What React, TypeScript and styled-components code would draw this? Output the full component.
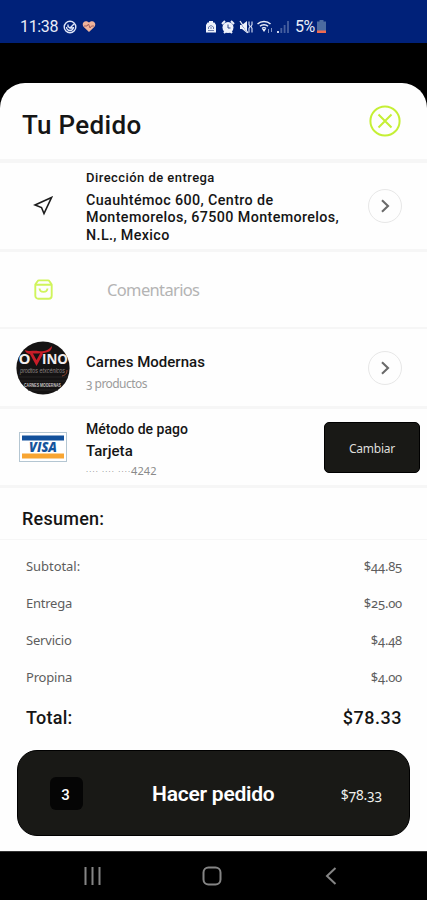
import React from 'react';
import styled, { createGlobalStyle } from 'styled-components';

const Global = createGlobalStyle`
  * { box-sizing: border-box; }
  body { margin: 0; background: #000; font-family: Roboto, "Liberation Sans", sans-serif; color: #151515; }
  button { font: inherit; border: 0; padding: 0; background: none; color: inherit; }
`;

const Screen = styled.div`
  width: 427px;
  height: 900px;
  display: flex;
  flex-direction: column;
  background: #000;
  overflow: hidden;
`;

const StatusBar = styled.header`
  height: 43px;
  flex: none;
  display: flex;
  align-items: center;
  padding: 10px 0 0 20px;
  margin-bottom: 40px;
  background: #002179;
  color: #e9edf8;
  font-size: 16px;
  line-height: 18px;
`;

const StatusGroup = styled.div<{ $gap: number; $left?: number }>`
  display: flex;
  align-items: center;
  gap: ${p => p.$gap}px;
  margin-left: ${p => p.$left ?? 0}px;
  svg { display: block; }
`;

const Clock = styled.span`
  letter-spacing: -0.35px;
`;

const Sheet = styled.main`
  height: 768px;
  flex: none;
  display: flex;
  flex-direction: column;
  background: #fefefe;
  border-radius: 25px 25px 0 0;
`;

const Row = styled.section<{ $h: number; $line: number }>`
  height: ${p => p.$h}px;
  flex: none;
  display: flex;
  align-items: center;
  border-bottom: ${p => p.$line}px solid #f6f6f6;
`;

const TitleRow = styled(Row)`
  justify-content: space-between;
  padding: 0 26px 0 22px;
`;

const Title = styled.h1`
  margin: 0;
  font-size: 26px;
  line-height: 32px;
  font-weight: 500;
  letter-spacing: 0.3px;
  padding-top: 8px;
`;

const IconCell = styled.div`
  width: 86px;
  flex: none;
  display: flex;
  justify-content: center;
  svg { display: block; }
`;

const Body = styled.div<{ $top?: number }>`
  flex: 1;
  min-width: 0;
  padding-top: ${p => p.$top ?? 0}px;
`;

const CommentBody = styled(Body)`
  padding: 2px 0 0 21px;
`;

const Label = styled.div<{ $size: number; $line: number; $track?: number }>`
  font-size: ${p => p.$size}px;
  line-height: ${p => p.$line}px;
  letter-spacing: ${p => p.$track ?? 0}px;
  font-weight: 500;
  font-style: normal;
  white-space: nowrap;
`;

const FieldName = styled(Label)`
  padding-bottom: 4px;
`;

const Light = styled.span<{ $size: number; $color: string; $track?: number }>`
  font-family: "Noto Sans", "Open Sans", sans-serif;
  font-variant-numeric: oldstyle-nums;
  font-size: ${p => p.$size}px;
  line-height: 18px;
  letter-spacing: ${p => p.$track ?? 0}px;
  color: ${p => p.$color};
  white-space: nowrap;
`;

const LiningLight = styled(Light)`
  font-variant-numeric: normal;
`;

const CardNumber = styled.div`
  display: flex;
  align-items: center;
  height: 16px;
`;

const Dots = styled.span`
  width: 45px;
  font-size: 8px;
  line-height: 17px;
  color: #777;
  letter-spacing: 1.15px;
  white-space: nowrap;
`;

const RoundButton = styled.button`
  width: 34px;
  height: 34px;
  flex: none;
  display: grid;
  place-items: center;
  margin-right: 25px;
  border: 1.5px solid #e7e7e7;
  border-radius: 50%;
`;

const ChangeButton = styled.button`
  width: 96px;
  height: 51px;
  flex: none;
  margin: 0 7px 0 0;
  padding-top: 2px;
  border: 1px solid #000;
  border-radius: 5px;
  background: #191916;
`;

const SummaryTitle = styled(Row)`
  padding: 11px 0 0 22px;
`;

const Lines = styled.div`
  display: flex;
  flex-direction: column;
  padding: 7px 25px 0 26px;
`;

const Line = styled.div<{ $h?: number }>`
  height: ${p => p.$h ?? 37.25}px;
  display: flex;
  align-items: center;
  justify-content: space-between;
`;

const OrderButton = styled.button`
  width: 393px;
  height: 86px;
  flex: none;
  display: flex;
  align-items: center;
  margin: auto 0 15px 17px;
  padding: 0 27px 0 32px;
  border: 1px solid #000;
  border-radius: 20px;
  background: #191916;
  color: #fff;
`;

const Count = styled.span`
  width: 33px;
  height: 33px;
  display: grid;
  place-items: center;
  padding: 3px 2px 0 0;
  border-radius: 6px;
  background: #050505;
  font-size: 15px;
  font-weight: 500;
`;

const OrderText = styled.span`
  margin: 1px auto 0 69px;
  font-size: 21px;
  font-weight: 600;
  letter-spacing: -0.23px;
`;

const OrderPrice = styled.span`
  padding-top: 2px;
`;

const NavBar = styled.nav`
  height: 49px;
  flex: none;
  display: flex;
  align-items: center;
  padding: 0 0 0 83px;
  border-top: 1px solid #333;
  svg { display: block; }
`;

const NavItem = styled.span<{ $left: number }>`
  margin-left: ${p => p.$left}px;
`;

const BatteryBox = styled.span`
  display: flex;
  align-items: center;
  gap: 2px;
  margin-left: 2px;
  font-size: 16px;
  letter-spacing: -0.6px;
`;

function Battery() {
  return (
    <BatteryBox>
      5%
      <svg width="9" height="13" viewBox="0 0 9 13">
        <path d="M2.5 0h4v1.500H9V13H0V1.500h2.500z" fill="#4c6ba0" />
        <path d="M0 10.500h9V13H0z" fill="#f06a50" />
      </svg>
    </BatteryBox>
  );
}

function Chevron() {
  return (
    <RoundButton aria-label="Abrir">
      <svg width="12" height="16" viewBox="0 0 12 16" fill="none" stroke="#6a6a6a" strokeWidth="2.1">
        <path d="M3 2.300 9 8 3 13.700" />
      </svg>
    </RoundButton>
  );
}

function StoreLogo() {
  return (
    <svg width="54" height="54" viewBox="0 0 54 54">
      <circle cx="27" cy="27" r="26.6" fill="#151313" />
      <path d="M2 36h50M4 40h46M12 49h30" stroke="#272525" />
      <g fontFamily="Open Sans" fontWeight="700" fill="#f1eded" fontSize="14.5">
        <text x="2.5" y="23" textLength="12" lengthAdjust="spacingAndGlyphs">O</text>
        <text x="26" y="23" textLength="26" lengthAdjust="spacingAndGlyphs">INO</text>
      </g>
      <path d="M9 9c4 2 9 0 13 1s10 0 14-5c0 5-4 7-10 7-5 1-10 0-13 1-2-1-4-2-4-4z" fill="#c91d28" />
      <path d="M15 12l5.500 10L26 12" fill="none" stroke="#c91d28" strokeWidth="2.8" />
      <text x="4" y="32" fontSize="6.500" fontStyle="italic" fontFamily="Liberation Sans" fill="#8b8583" textLength="45" lengthAdjust="spacingAndGlyphs">prodtos etxcénicos</text>
      <path d="M46 35c4-1 5-3 5-6" stroke="#94432d" fill="none" />
      <text x="8" y="46" fontSize="4.500" fontWeight="700" fontFamily="Liberation Sans" fill="#c8c4c4" textLength="37" lengthAdjust="spacingAndGlyphs">CARNES MODERNAS</text>
    </svg>
  );
}

function VisaCard() {
  return (
    <svg width="48" height="30" viewBox="0 0 48 30">
      <rect x=".5" y=".5" width="47" height="29" fill="#fff" stroke="#b4c6d2" />
      <path fill="#12509b" d="M3 3.500h42v5H3z" />
      <path fill="#f8a532" d="M3 21.500h42v5H3z" />
      <text x="10" y="20" fontFamily="Open Sans" fontSize="13.500" fontWeight="800" fontStyle="italic" fill="#16549c" textLength="28" lengthAdjust="spacingAndGlyphs">VISA</text>
    </svg>
  );
}

const charges = [
  { name: 'Subtotal:', amount: '$44.85', track: -0.05 },
  { name: 'Entrega', amount: '$25.00', track: -0.25 },
  { name: 'Servicio', amount: '$4.48', track: -0.2 },
  { name: 'Propina', amount: '$4.00', track: -0.2 },
];

export default function App() {
  return (
    <Screen>
      <Global />
      <StatusBar>
        <StatusGroup $gap={5}>
          <Clock>11:38</Clock>
          <svg width="14" height="14" viewBox="0 0 14 14" fill="none" stroke="#dfe6f8" strokeWidth="1.4">
            <circle cx="7" cy="7" r="5.8" /><path d="M3.500 7a3.500 3.500 0 0 0 7 0M5 4.500v2l2 1.500 2-2 2-2M7 8h3" />
          </svg>
          <svg width="14" height="13" viewBox="0 0 14 13">
            <path d="M7 12 1.500 6.700C-1 3 3-1 7 2.500 11-1 15 3 12.500 6.700z" fill="#f0b49b" />
            <path d="M2 6h3l1.500-2 1.500 4 1.500-2H12" stroke="#a3605e" fill="none" />
          </svg>
        </StatusGroup>
        <StatusGroup $gap={4} $left={109}>
          <svg width="12" height="14" viewBox="0 0 12 14">
            <path d="M4 1h4v1.500h1.500L11 5v7.500H1V5l1.500-2.500H4z" fill="#edf1fb" />
            <path d="M3 10.500h6M3.500 9V7L6 5.500 8.500 7v2M5 8h2" stroke="#7181ae" fill="none" />
          </svg>
          <svg width="14" height="14" viewBox="0 0 14 14">
            <circle cx="7" cy="7.500" r="5.500" fill="#edf1fb" />
            <path d="m1 4 3-3M13 4l-3-3M3 13l2-2M11 13l-2-2" stroke="#edf1fb" strokeWidth="2" />
            <path d="M7 4.500V8h2.500" stroke="#263f82" fill="none" />
          </svg>
          <svg width="14" height="14" viewBox="0 0 14 14" fill="none">
            <path d="M1 5h2l5-4v12L3 9H1z" fill="#edf1fb" />
            <path d="m0 1 9 12" stroke="#002179" strokeWidth="1" />
            <path d="m1 1 8 12" stroke="#edf1fb" strokeWidth="1.3" />
            <path d="M10 1.500v3l1 2-1 2v4M13 1.500v3l-1 2 1 2v4" stroke="#c8d2ed" strokeWidth="1.2" />
          </svg>
          <svg width="16" height="14" viewBox="0 0 16 14" fill="none" stroke="#edf1fb" strokeWidth="1.5">
            <path d="M.5 4C4 .5 10 .5 13.500 4M3 6.200c2-2 6-2 8 0M5 8.500c1-1 3-1 4 0" />
            <path d="m7 12-2-3h4z" fill="#edf1fb" stroke="none" />
            <path d="M11.500 9v4m3-5v4" stroke="#8295c5" strokeWidth="1" />
          </svg>
          <svg width="12" height="14" viewBox="0 0 12 14" stroke="#465f9f" strokeWidth="1.800">
            <path d="M1 11v2" stroke="#e5eafb" /><path d="M4.300 8v5M7.600 5v8M11 1v12" />
          </svg>
          <Battery />
        </StatusGroup>
      </StatusBar>

      <Sheet>
        <TitleRow $h={80} $line={4}>
          <Title>Tu Pedido</Title>
          <button aria-label="Cerrar">
            <svg width="32" height="32" viewBox="0 0 32 32" fill="none" stroke="#c5ef35" strokeWidth="2" display="block">
              <circle cx="16" cy="16" r="14.600" /><path d="m9.500 9.500 13 13m0-13-13 13" />
            </svg>
          </button>
        </TitleRow>

        <Row $h={89} $line={3}>
          <IconCell>
            <svg width="20" height="20" viewBox="0 0 20 20" fill="none" stroke="#1c1c1c" strokeWidth="1.600">
              <path d="M18.500 1.500 2 9l6.500 2.500L11 17.500z" />
            </svg>
          </IconCell>
          <Body>
            <FieldName $size={13} $line={20} $track={0.45}>Dirección de entrega</FieldName>
            <Label as="address" $size={14.3} $line={17.5} $track={0.38}>
              Cuauhtémoc 600, Centro de<br />Montemorelos, 67500 Montemorelos,<br />N.L., Mexico
            </Label>
          </Body>
          <Chevron />
        </Row>

        <Row $h={77} $line={2}>
          <IconCell>
            <svg width="19" height="21" viewBox="0 0 19 21" fill="none" stroke="#d0f45c" strokeWidth="1.900" strokeLinejoin="round">
              <path d="M1.300 5.500 3.500 2.200Q4 1.400 5 1.400h9q1 0 1.500.8l2.200 3.300v11.300a3 3 0 0 1-3 3H4.300a3 3 0 0 1-3-3zM1.300 5.700h16.400M5.500 9.500c.5 4.500 7.500 4.500 8 0" />
            </svg>
          </IconCell>
          <CommentBody><Light $size={16.5} $color="#b4b4b4" $track={-0.65}>Comentarios</Light></CommentBody>
        </Row>

        <Row $h={80} $line={3}>
          <IconCell><StoreLogo /></IconCell>
          <Body $top={9}>
            <Label $size={15} $line={22} $track={0.02}>Carnes Modernas</Label>
            <Light $size={12} $color="#9b9b9b" $track={-0.55}>3 productos</Light>
          </Body>
          <Chevron />
        </Row>

        <Row $h={79} $line={3}>
          <IconCell><VisaCard /></IconCell>
          <Body $top={4}>
            <Label $size={14} $line={20} $track={0.02}>Método de pago</Label>
            <Label $size={15} $line={24} $track={0.05}>Tarjeta</Label>
            <CardNumber><Dots>···· ···· ····</Dots><LiningLight $size={11} $color="#8a8a8a" $track={0.1}>4242</LiningLight></CardNumber>
          </Body>
          <ChangeButton><Light $size={12} $color="#dededb" $track={-0.25}>Cambiar</Light></ChangeButton>
        </Row>

        <SummaryTitle $h={52} $line={1}>
          <Label $size={18} $line={22} $track={0.25}>Resumen:</Label>
        </SummaryTitle>

        <Lines>
          {charges.map(({ name, amount, track }) => (
            <Line key={name}>
              <Light $size={13} $color="#5d5d5d" $track={track}>{name}</Light>
              <Light $size={13} $color="#5d5d5d" $track={-0.2}>{amount}</Light>
            </Line>
          ))}
          <Line $h={43}>
            <Label $size={18} $line={22} $track={0.25}>Total:</Label>
            <Label $size={18} $line={22} $track={0.5}>$78.33</Label>
          </Line>
        </Lines>

        <OrderButton>
          <Count>3</Count>
          <OrderText>Hacer pedido</OrderText>
          <OrderPrice><Light $size={14} $color="#f0f0ed" $track={-0.2}>$78.33</Light></OrderPrice>
        </OrderButton>
      </Sheet>

      <NavBar>
        <svg width="19" height="20" viewBox="0 0 19 20" stroke="#858585" strokeWidth="2"><path d="M2.500 1v18M9.500 1v18M16.500 1v18" /></svg>
        <NavItem $left={100}>
          <svg width="20" height="20" viewBox="0 0 20 20" fill="none" stroke="#858585" strokeWidth="2"><rect x="1.500" y="1.500" width="17" height="17" rx="5" /></svg>
        </NavItem>
        <NavItem $left={103}>
          <svg width="12" height="20" viewBox="0 0 12 20" fill="none" stroke="#858585" strokeWidth="2"><path d="m10.500 2-8.500 8 8.500 8" /></svg>
        </NavItem>
      </NavBar>
    </Screen>
  );
}
